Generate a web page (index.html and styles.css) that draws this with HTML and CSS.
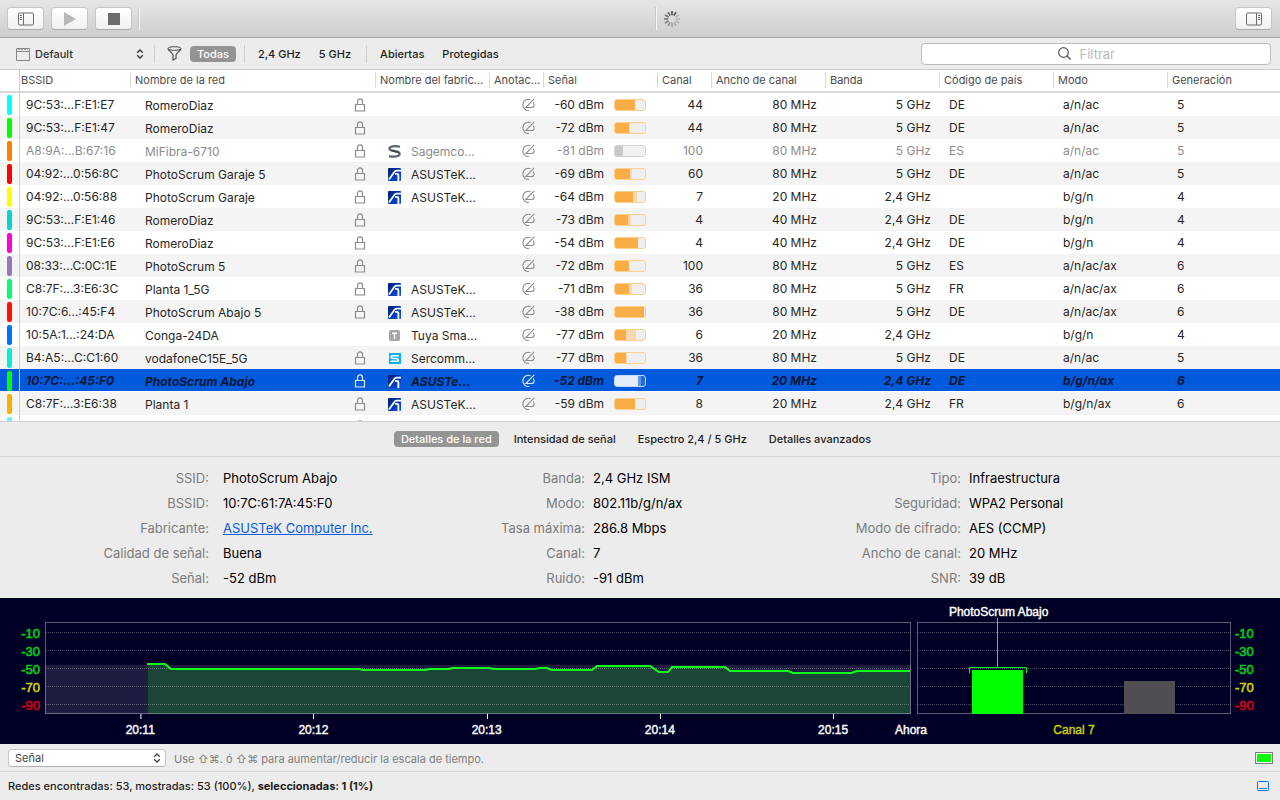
FILE: index.html
```html
<!DOCTYPE html>
<html lang="es">
<head>
<meta charset="utf-8">
<title>Redes Wi-Fi</title>
<link rel="stylesheet" href="styles.css">
</head>
<body>
<svg class="sprite" aria-hidden="true">
  <defs>
    <linearGradient id="asusFill" x1="0" y1="0" x2="1" y2="1"><stop offset="0" stop-color="#001c70"/><stop offset="1" stop-color="#0b55e6"/></linearGradient>
  </defs>
  <symbol id="lock" viewBox="0 0 12 14"><path d="M1.500 6.500h9v6.500h-9zM3.500 6.500V3.500C3.500 1.900 4.500.8 6 .8s2.500 1.100 2.500 2.700v3" fill="none" stroke="currentColor" stroke-width="1.200"/></symbol>
  <symbol id="note" viewBox="0 0 14 14"><path d="M9.500 1.700A5.600 5.600 0 1 0 8 12.500M13.200.8L4.800 9.500h5.800c2.600 0 3.200-2.400 1.700-5" fill="none" stroke="currentColor" stroke-width="1.100"/></symbol>
  <symbol id="asus" viewBox="0 0 13 13"><rect width="13" height="13" rx="1" fill="url(#asusFill)"/><path d="M1 11.500l5.300-7.600C6.900 3 7.500 2.700 8.500 2.700H13M7 5.800h2c1 0 1.400.4 1.400 1.400V13" fill="none" stroke="#fff" stroke-width="1.800"/></symbol>
  <symbol id="sagem" viewBox="0 0 13 13"><path d="M12 1.800C7.500.7 1.300 1 1.300 3.800c0 2.700 10.400 1.500 10.400 5 0 3.200-6.500 3.300-10.700 2.300" fill="none" stroke="#59636c" stroke-width="2.200"/><path d="M3 5.500l8 2" stroke="#35424c" stroke-width="1.500"/></symbol>
  <symbol id="tuya" viewBox="0 0 13 13"><rect x="1" y="1" width="11" height="11" rx="2" fill="#a5a5a5"/><path d="M4 4.300h5M6.500 4v6" stroke="#fff" stroke-width="1.500"/></symbol>
  <symbol id="sercomm" viewBox="0 0 13 13"><rect x="1" y="1" width="12" height="11" fill="#0bb0ef"/><path d="M11 3.700H4.200c-1.500 0-1.500 2.300 0 2.500l5 .6c1.500.2 1.500 2.500 0 2.500H2.500" fill="none" stroke="#fff" stroke-width="1.600"/></symbol>
  <symbol id="updown" viewBox="0 0 8 10"><path d="M1.200 3.700L4 1l2.800 2.700M1.200 6.300L4 9l2.800-2.700" fill="none" stroke="currentColor" stroke-width="1.300"/></symbol>
</svg>

<header class="toolbar">
  <div class="tools">
    <button class="tool" aria-label="Barra lateral izquierda"><svg width="18" height="14" viewBox="0 0 18 14"><rect x="1.500" y="1" width="15" height="12" rx="1" fill="none" stroke="#6b6b6b"/><path d="M6.500 1v12M2.800 3.500h2.200M2.800 5.500h2.200M2.800 7.500h2.200" stroke="#6b6b6b"/></svg></button>
    <button class="tool" aria-label="Iniciar"><svg width="14" height="14" viewBox="0 0 14 14"><path d="M1 0l12 7-12 7z" fill="#b9b9b9"/></svg></button>
    <button class="tool" aria-label="Detener"><svg width="12" height="12" viewBox="0 0 12 12"><rect width="12" height="12" fill="#6c6c6c"/></svg></button>
    <span class="groove"></span>
  </div>
  <div class="activity">
    <span class="groove"></span>
    <svg width="16" height="16" viewBox="-8 -8 16 16" stroke-width="1.500" stroke="#3c3c3c"><path d="M0-3.800V-8"/><path d="M0-3.800V-8" transform="rotate(30)" opacity=".9"/><path d="M0-3.800V-8" transform="rotate(60)" opacity=".25"/><path d="M0-3.800V-8" transform="rotate(90)" opacity=".25"/><path d="M0-3.800V-8" transform="rotate(120)" opacity=".25"/><path d="M0-3.800V-8" transform="rotate(150)" opacity=".3"/><path d="M0-3.800V-8" transform="rotate(180)" opacity=".4"/><path d="M0-3.800V-8" transform="rotate(210)" opacity=".5"/><path d="M0-3.800V-8" transform="rotate(240)" opacity=".6"/><path d="M0-3.800V-8" transform="rotate(270)" opacity=".7"/><path d="M0-3.800V-8" transform="rotate(300)" opacity=".7"/><path d="M0-3.800V-8" transform="rotate(330)" opacity=".8"/></svg>
  </div>
  <div class="tools end">
    <button class="tool" aria-label="Barra lateral derecha"><svg width="18" height="14" viewBox="0 0 18 14"><rect x="1.500" y="1" width="15" height="12" rx="1" fill="none" stroke="#6b6b6b"/><path d="M11.500 1v12M13 3.500h2.200M13 5.500h2.200M13 7.500h2.200" stroke="#6b6b6b"/></svg></button>
  </div>
</header>

<nav class="filters">
  <label class="profile">
    <svg width="14" height="14" viewBox="0 0 14 14"><path d="M.5 1.500h13v12H.5zM.5 4.500h13" fill="none" stroke="#888"/><path d="M2 2.500h10" stroke="#999" stroke-dasharray="2 1"/></svg>
    <select aria-label="Perfil"><option>Default</option></select>
    <svg class="chevrons" width="8" height="10"><use href="#updown"/></svg>
  </label>
  <span class="rule first"></span>
  <svg class="funnel" width="15" height="15" viewBox="0 0 15 15"><ellipse cx="7.500" cy="2.500" rx="6.500" ry="1.800" fill="none" stroke="#4c4c4c"/><path d="M1 2.800c.3 1.200 5 5 5 6.200v5l3-1.500V9c0-1.200 4.700-5 5-6.200" fill="none" stroke="#4c4c4c" stroke-width="1.200"/></svg>
  <button class="pill on">Todas</button>
  <span class="rule"></span>
  <button class="pill">2,4 GHz</button>
  <button class="pill">5 GHz</button>
  <span class="rule"></span>
  <button class="pill">Abiertas</button>
  <button class="pill">Protegidas</button>
  <label class="search">
    <svg width="13" height="13" viewBox="0 0 13 13"><circle cx="5.500" cy="5.500" r="4.800" fill="none" stroke="#555" stroke-width="1.200"/><path d="M9 9l3.600 3.600" stroke="#555" stroke-width="1.300"/></svg>
    <input type="text" placeholder="Filtrar" aria-label="Filtrar">
  </label>
</nav>

<main class="networks">
<table>
<colgroup><col class="w-tag"><col class="w-bssid"><col><col class="w-lock"><col class="w-mid"><col class="w-note"><col class="w-mid"><col class="w-chan"><col class="w-mid"><col class="w-mid"><col class="w-mid"><col class="w-mid"><col class="w-last"></colgroup>
<thead><tr><th class="tag"></th><th>BSSID</th><th colspan="2">Nombre de la red</th><th>Nombre del fabric…</th><th>Anotac…</th><th>Señal</th><th>Canal</th><th>Ancho de canal</th><th>Banda</th><th>Código de país</th><th>Modo</th><th>Generación</th></tr></thead>
<tbody>
<tr><td class="tag"><i class="c-cyan"></i></td><td>9C:53:…F:E1:E7</td><td class="name">RomeroDiaz</td><td class="ic"><svg class="lock"><use href="#lock"/></svg></td><td></td><td class="an"><svg class="note"><use href="#note"/></svg></td><td class="sig"><div>-60 dBm<meter class="m" style="--v:66%;--p:66%" value="66" max="100"></meter></div></td><td class="r">44</td><td class="r">80 MHz</td><td class="r">5 GHz</td><td>DE</td><td>a/n/ac</td><td>5</td></tr>
<tr><td class="tag"><i class="c-green"></i></td><td>9C:53:…F:E1:47</td><td class="name">RomeroDiaz</td><td class="ic"><svg class="lock"><use href="#lock"/></svg></td><td></td><td class="an"><svg class="note"><use href="#note"/></svg></td><td class="sig"><div>-72 dBm<meter class="m" style="--v:46%;--p:49%" value="46" max="100"></meter></div></td><td class="r">44</td><td class="r">80 MHz</td><td class="r">5 GHz</td><td>DE</td><td>a/n/ac</td><td>5</td></tr>
<tr class="dim"><td class="tag"><i class="c-orange"></i></td><td>A8:9A:…B:67:16</td><td class="name">MiFibra-6710</td><td class="ic"><svg class="lock"><use href="#lock"/></svg></td><td class="maker"><div><svg class="logo"><use href="#sagem"/></svg>Sagemco…</div></td><td class="an"><svg class="note"><use href="#note"/></svg></td><td class="sig"><div>-81 dBm<meter class="m" style="--v:27%;--p:27%" value="27" max="100"></meter></div></td><td class="r">100</td><td class="r">80 MHz</td><td class="r">5 GHz</td><td>ES</td><td>a/n/ac</td><td>5</td></tr>
<tr><td class="tag"><i class="c-red"></i></td><td>04:92:…0:56:8C</td><td class="name">PhotoScrum Garaje 5</td><td class="ic"><svg class="lock"><use href="#lock"/></svg></td><td class="maker"><div><svg class="logo"><use href="#asus"/></svg>ASUSTeK…</div></td><td class="an"><svg class="note"><use href="#note"/></svg></td><td class="sig"><div>-69 dBm<meter class="m" style="--v:50%;--p:56%" value="50" max="100"></meter></div></td><td class="r">60</td><td class="r">80 MHz</td><td class="r">5 GHz</td><td>DE</td><td>a/n/ac</td><td>5</td></tr>
<tr><td class="tag"><i class="c-yellow"></i></td><td>04:92:…0:56:88</td><td class="name">PhotoScrum Garaje</td><td class="ic"><svg class="lock"><use href="#lock"/></svg></td><td class="maker"><div><svg class="logo"><use href="#asus"/></svg>ASUSTeK…</div></td><td class="an"><svg class="note"><use href="#note"/></svg></td><td class="sig"><div>-64 dBm<meter class="m" style="--v:60%;--p:72%" value="60" max="100"></meter></div></td><td class="r">7</td><td class="r">20 MHz</td><td class="r">2,4 GHz</td><td></td><td>b/g/n</td><td>4</td></tr>
<tr><td class="tag"><i class="c-teal"></i></td><td>9C:53:…F:E1:46</td><td class="name">RomeroDiaz</td><td class="ic"><svg class="lock"><use href="#lock"/></svg></td><td></td><td class="an"><svg class="note"><use href="#note"/></svg></td><td class="sig"><div>-73 dBm<meter class="m" style="--v:43%;--p:53%" value="43" max="100"></meter></div></td><td class="r">4</td><td class="r">40 MHz</td><td class="r">2,4 GHz</td><td>DE</td><td>b/g/n</td><td>4</td></tr>
<tr><td class="tag"><i class="c-magenta"></i></td><td>9C:53:…F:E1:E6</td><td class="name">RomeroDiaz</td><td class="ic"><svg class="lock"><use href="#lock"/></svg></td><td></td><td class="an"><svg class="note"><use href="#note"/></svg></td><td class="sig"><div>-54 dBm<meter class="m" style="--v:76%;--p:76%" value="76" max="100"></meter></div></td><td class="r">4</td><td class="r">40 MHz</td><td class="r">2,4 GHz</td><td>DE</td><td>b/g/n</td><td>4</td></tr>
<tr><td class="tag"><i class="c-violet"></i></td><td>08:33:…C:0C:1E</td><td class="name">PhotoScrum 5</td><td class="ic"><svg class="lock"><use href="#lock"/></svg></td><td></td><td class="an"><svg class="note"><use href="#note"/></svg></td><td class="sig"><div>-72 dBm<meter class="m" style="--v:46%;--p:46%" value="46" max="100"></meter></div></td><td class="r">100</td><td class="r">80 MHz</td><td class="r">5 GHz</td><td>ES</td><td>a/n/ac/ax</td><td>6</td></tr>
<tr><td class="tag"><i class="c-spring"></i></td><td>C8:7F:…3:E6:3C</td><td class="name">Planta 1_5G</td><td class="ic"><svg class="lock"><use href="#lock"/></svg></td><td class="maker"><div><svg class="logo"><use href="#asus"/></svg>ASUSTeK…</div></td><td class="an"><svg class="note"><use href="#note"/></svg></td><td class="sig"><div>-71 dBm<meter class="m" style="--v:46%;--p:56%" value="46" max="100"></meter></div></td><td class="r">36</td><td class="r">80 MHz</td><td class="r">5 GHz</td><td>FR</td><td>a/n/ac/ax</td><td>6</td></tr>
<tr><td class="tag"><i class="c-red2"></i></td><td>10:7C:6…:45:F4</td><td class="name">PhotoScrum Abajo 5</td><td class="ic"><svg class="lock"><use href="#lock"/></svg></td><td class="maker"><div><svg class="logo"><use href="#asus"/></svg>ASUSTeK…</div></td><td class="an"><svg class="note"><use href="#note"/></svg></td><td class="sig"><div>-38 dBm<meter class="m" style="--v:93%;--p:93%" value="93" max="100"></meter></div></td><td class="r">36</td><td class="r">80 MHz</td><td class="r">5 GHz</td><td>DE</td><td>a/n/ac/ax</td><td>6</td></tr>
<tr><td class="tag"><i class="c-blue"></i></td><td>10:5A:1…:24:DA</td><td class="name">Conga-24DA</td><td></td><td class="maker"><div><svg class="logo"><use href="#tuya"/></svg>Tuya Sma…</div></td><td class="an"><svg class="note"><use href="#note"/></svg></td><td class="sig"><div>-77 dBm<meter class="m" style="--v:37%;--p:69%" value="37" max="100"></meter></div></td><td class="r">6</td><td class="r">20 MHz</td><td class="r">2,4 GHz</td><td></td><td>b/g/n</td><td>4</td></tr>
<tr><td class="tag"><i class="c-aqua"></i></td><td>B4:A5:…C:C1:60</td><td class="name">vodafoneC15E_5G</td><td class="ic"><svg class="lock"><use href="#lock"/></svg></td><td class="maker"><div><svg class="logo"><use href="#sercomm"/></svg>Sercomm…</div></td><td class="an"><svg class="note"><use href="#note"/></svg></td><td class="sig"><div>-77 dBm<meter class="m" style="--v:37%;--p:40%" value="37" max="100"></meter></div></td><td class="r">36</td><td class="r">80 MHz</td><td class="r">5 GHz</td><td>DE</td><td>a/n/ac</td><td>5</td></tr>
<tr class="sel"><td class="tag"><i class="c-green"></i></td><td>10:7C:…:45:F0</td><td class="name">PhotoScrum Abajo</td><td class="ic"><svg class="lock"><use href="#lock"/></svg></td><td class="maker"><div><svg class="logo"><use href="#asus"/></svg>ASUSTe…</div></td><td class="an"><svg class="note"><use href="#note"/></svg></td><td class="sig"><div>-52 dBm<meter class="m" style="--v:76%;--p:86%" value="76" max="100"></meter></div></td><td class="r">7</td><td class="r">20 MHz</td><td class="r">2,4 GHz</td><td>DE</td><td>b/g/n/ax</td><td>6</td></tr>
<tr><td class="tag"><i class="c-amber"></i></td><td>C8:7F:…3:E6:38</td><td class="name">Planta 1</td><td class="ic"><svg class="lock"><use href="#lock"/></svg></td><td class="maker"><div><svg class="logo"><use href="#asus"/></svg>ASUSTeK…</div></td><td class="an"><svg class="note"><use href="#note"/></svg></td><td class="sig"><div>-59 dBm<meter class="m" style="--v:66%;--p:66%" value="66" max="100"></meter></div></td><td class="r">8</td><td class="r">20 MHz</td><td class="r">2,4 GHz</td><td>FR</td><td>b/g/n/ax</td><td>6</td></tr>
<tr><td class="tag"><i class="c-sky"></i></td><td></td><td></td><td class="ic"><svg class="lock"><use href="#lock"/></svg></td><td></td><td class="an"><svg class="note"><use href="#note"/></svg></td><td></td><td></td><td></td><td></td><td></td><td></td><td></td></tr>
</tbody>
</table>
</main>

<nav class="tabs">
  <button class="pill on">Detalles de la red</button>
  <button class="pill">Intensidad de señal</button>
  <button class="pill">Espectro 2,4 / 5 GHz</button>
  <button class="pill">Detalles avanzados</button>
</nav>

<section class="details">
  <dl class="wide"><dt>SSID:</dt><dd>PhotoScrum Abajo</dd><dt>BSSID:</dt><dd>10:7C:61:7A:45:F0</dd><dt>Fabricante:</dt><dd><a href="#">ASUSTeK Computer Inc.</a></dd><dt>Calidad de señal:</dt><dd>Buena</dd><dt>Señal:</dt><dd>-52 dBm</dd></dl>
  <dl><dt>Banda:</dt><dd>2,4 GHz ISM</dd><dt>Modo:</dt><dd>802.11b/g/n/ax</dd><dt>Tasa máxima:</dt><dd>286.8 Mbps</dd><dt>Canal:</dt><dd>7</dd><dt>Ruido:</dt><dd>-91 dBm</dd></dl>
  <dl><dt>Tipo:</dt><dd>Infraestructura</dd><dt>Seguridad:</dt><dd>WPA2 Personal</dd><dt>Modo de cifrado:</dt><dd>AES (CCMP)</dd><dt>Ancho de canal:</dt><dd>20 MHz</dd><dt>SNR:</dt><dd>39 dB</dd></dl>
</section>

<section class="charts">
  <div class="scale left"><span>-10</span><span>-30</span><span>-50</span><span class="warn">-70</span><span class="bad">-90</span></div>
  <div class="plot">
    <svg viewBox="0 0 866 92" preserveAspectRatio="none">
      <rect y="43" width="866" height="49" fill="#1e1c3f"/>
      <path d="M103 92V42H120L126 47H314L318 48H380L385 47H403L408 46H444L449 47H490L495 46H502L507 48H547L552 44H605L614 50H623L627 45H680L685 49H743L748 51H806L812 49H865V92z" fill="#1b4537"/>
      <path d="M1 10.500h864M1 28.500h864M1 46.500h864M1 64.500h864M1 82.500h864" class="dots"/>
      <rect x=".5" y=".5" width="865" height="91" class="frame"/>
      <path d="M102 42H120L126 47H314L318 48H380L385 47H403L408 46H444L449 47H490L495 46H502L507 48H547L552 44H605L614 50H623L627 45H680L685 49H743L748 51H806L812 49H865" class="trace"/>
    </svg>
    <div class="times"><span style="left:11%">20:11</span><span style="left:31%">20:12</span><span style="left:51%">20:13</span><span style="left:71%">20:14</span><span style="left:91%">20:15</span><span class="now" style="left:100%">Ahora</span></div>
  </div>
  <div class="plot">
    <svg viewBox="0 0 314 92" preserveAspectRatio="none">
      <path d="M1 10.500h312M1 28.500h312M1 46.500h312M1 64.500h312M1 82.500h312" class="dots"/>
      <rect x=".5" y=".5" width="313" height="91" class="frame"/>
      <path d="M55 48h51v44H55z" fill="#0f0"/><path d="M207 59h51v33h-51z" fill="#504e52"/>
      <path d="M80.500-4v49.500M52.500 51v-5.500h57V51" fill="none" stroke="#00ff20"/>
    </svg>
    <span class="peak">PhotoScrum Abajo</span>
    <div class="channel">Canal 7</div>
  </div>
  <div class="scale"><span>-10</span><span>-30</span><span>-50</span><span class="warn">-70</span><span class="bad">-90</span></div>
</section>

<section class="options">
  <label class="metric"><select aria-label="Métrica"><option>Señal</option></select><svg class="chevrons" width="8" height="10"><use href="#updown"/></svg></label>
  <span class="hint">Use ⇧⌘. ó ⇧⌘ para aumentar/reducir la escala de tiempo.</span>
  <button class="swatch" aria-label="Color"></button>
</section>

<footer class="status">
  <span>Redes encontradas: 53, mostradas: 53 (100%), <b>seleccionadas: 1 (1%)</b></span>
  <button class="panel" aria-label="Panel inferior"><svg width="12" height="10" viewBox="0 0 12 10"><rect x=".5" y=".5" width="11" height="9" rx="1" fill="none" stroke="#0a70ff"/><path d="M2 7.500h8" stroke="#0a70ff"/></svg></button>
</footer>
</body>
</html>
```
FILE: styles.css
```css
* { box-sizing: border-box; }
body {
  margin: 0;
  height: 100vh;
  min-height: 600px;
  display: flex;
  flex-direction: column;
  overflow: hidden;
  background: #ececec;
  color: #1c1c1c;
  font: 11px/16px Inter, "Liberation Sans", sans-serif;
}
button, select, input { font: inherit; color: inherit; margin: 0; padding: 0; border: 0; background: none; }
select { appearance: none; outline: none; }
svg { display: block; flex: none; }
.sprite { position: absolute; width: 0; height: 0; }

.toolbar {
  flex: none;
  display: flex;
  height: 38px;
  padding: 0 8px 0 7px;
  border-bottom: 1px solid #a6a6a6;
  background: linear-gradient(#e6e6e6, #cecece);
}
.tools { flex: 1; display: flex; align-items: center; gap: 7px; }
.end { justify-content: flex-end; }
.tool {
  display: flex;
  align-items: center;
  justify-content: center;
  width: 37px;
  height: 23px;
  border-radius: 4px;
  border: 1px solid #c6c6c6;
  border-bottom-color: #aaa;
  background: linear-gradient(#fff, #f1f1f1);
}
.groove { width: 1px; height: 23px; background: #f6f6f6; box-shadow: -1px 0 #c8c8c8; }
.activity { width: 80px; display: flex; align-items: center; justify-content: flex-end; gap: 7px; }

.filters {
  flex: none;
  display: flex;
  align-items: center;
  height: 32px;
  padding: 0 9px 0 16px;
  border-bottom: 1px solid #cdcdcd;
}
.profile { display: flex; align-items: center; gap: 5px; width: 128px; color: #333; font-weight: 500; }
.profile select { flex: 1; }
.rule { width: 1px; height: 18px; margin: 0 6px 0 4px; background: #cfcfcf; }
.rule.first { margin: 0 12px 0 10px; }
.funnel { margin-right: 8px; }
.pill { height: 16px; padding: 0 7px; border-radius: 4px; font-weight: 500; white-space: nowrap; }
.filters .pill { margin-right: 4px; }
.pill.on { background: #949494; color: #fff; }
.search {
  display: flex;
  align-items: center;
  justify-content: center;
  gap: 9px;
  width: 350px;
  height: 22px;
  margin-left: auto;
  border: 1px solid #bcbcbc;
  border-radius: 4px;
  background: #fff;
  font-size: 13px;
}
.search input { width: 55px; outline: none; }
.search input::placeholder { color: #b9b9b9; opacity: 1; }

.networks { flex: 1; min-height: 0; overflow: hidden; background: #fff; border-bottom: 1px solid #cfcfcf; }
table { width: 100%; table-layout: fixed; border-collapse: separate; border-spacing: 0; }
.w-tag { width: 20px; }
.w-bssid { width: 111px; }
.w-lock { width: 30px; }
.w-mid { width: 114px; }
.w-last { width: 112px; }
.w-note { width: 54px; }
.w-chan { width: 54px; }
th {
  height: 23px;
  padding: 0 0 1px 4px;
  border-bottom: 2px solid #d8d8d8;
  background: linear-gradient(#dcdcdc, #dcdcdc) right 0 top 2px / 1px 16px no-repeat;
  color: #4c4c4c;
  font-weight: 400;
  text-align: left;
  white-space: nowrap;
}
th:nth-child(2) { padding-left: 1px; }
th.tag, th:last-child { background: none; }
td { height: 23px; padding: 0 9px; font-size: 12px; line-height: 16px; white-space: nowrap; color: #262626; }
td:nth-child(2) { padding: 0 0 0 6px; }
.tag { padding: 0 5px 0 7px; border-right: 1px solid #cdcdcd; }
.tag i { display: block; width: 5px; height: 20px; border-radius: 2px; }
.name { padding: 2px 0 0 14px; }
.ic { padding: 0 8px; }
.lock { width: 12px; height: 14px; color: #8c8c8c; }
.an { padding: 0 0 0 31px; }
.note { width: 14px; height: 14px; color: #8c8c8c; }
.maker { padding: 2px 0 0 12px; }
.maker div { display: flex; align-items: center; gap: 10px; }
.logo { width: 13px; height: 13px; }
.sig { padding: 0 12px 0 0; }
.sig div { display: flex; align-items: center; justify-content: flex-end; gap: 10px; }
.m {
  appearance: none;
  width: 32px;
  height: 12px;
  border: 1px solid #fbcf8f;
  border-radius: 3px;
  background: linear-gradient(90deg, #fbad45 var(--v), #f6d8b0 var(--v) var(--p), #efefef var(--p)) border-box;
}
.m::-webkit-meter-inner-element { display: none; }
.r { text-align: right; }
tbody tr:nth-child(even) { background: #f4f4f4; }
.dim td { color: #8c8c8c; }
.dim .m { border-color: #d2d2d2; background: linear-gradient(90deg, #cacaca var(--v), #f1f1f1 var(--v)); }
.sel { background: linear-gradient(#005adc, #005adc) 0 0 / 100% 22px no-repeat; }
.sel td { color: #061638; font-weight: 700; font-style: italic; }
.sel .lock, .sel .note { color: #e4edfb; }
.sel .m { border-color: #c4d8f7; background: linear-gradient(90deg, #e6eefb var(--v), #5e95e6 var(--v) var(--p), #1e6ade var(--p)); }
.c-cyan { background: #0ff; }
.c-green { background: #0f0; }
.c-orange { background: #ff7d00; }
.c-red { background: #f00; }
.c-yellow { background: #ff0; }
.c-teal { background: #00d5cf; }
.c-magenta { background: #ff00d8; }
.c-violet { background: #9a76bd; }
.c-spring { background: #00ff72; }
.c-red2 { background: #ff1200; }
.c-blue { background: #0070ff; }
.c-aqua { background: #00f2d6; }
.c-amber { background: #f9b000; }
.c-sky { background: #5ff3ff; }

.tabs { flex: none; display: flex; align-items: center; justify-content: center; gap: 8px; height: 35px; padding-right: 8px; border-bottom: 1px solid #d2d2d2; }

.details { flex: none; display: grid; grid-template-columns: 400fr 376fr 504fr; padding: 9px 0 7px; }
dl { display: grid; grid-template-columns: 185px 1fr; column-gap: 8px; margin: 0; font-size: 13px; line-height: 25px; }
.wide { grid-template-columns: 209px 1fr; column-gap: 14px; }
dt { text-align: right; color: #7b7b7b; }
dd { margin: 0; color: #000; white-space: nowrap; }
a { color: #0a5be0; }

.charts {
  flex: none;
  display: grid;
  grid-template-columns: 45px 866fr 6px 314fr 49px;
  height: 146px;
  padding-top: 24px;
  background: #000026;
  color: #fff;
  font: 12px/18px "Liberation Sans", sans-serif;
}
.scale { display: flex; flex-direction: column; padding: 3px 0 0 4px; color: #00cc1c; font-size: 13px; -webkit-text-stroke: 0.6px; }
.scale.left { padding: 3px 5px 0 0; text-align: right; }
.warn { color: #cfcf00; }
.bad { color: #cf0010; }
.plot { position: relative; }
.plot + .plot { grid-column: 4; }
.plot svg { width: 100%; height: 92px; overflow: visible; }
.dots { fill: none; stroke: #fff; stroke-opacity: .3; stroke-dasharray: 1 1; }
.frame { fill: none; stroke: #fff; stroke-opacity: .35; }
.trace { fill: none; stroke: #10ff18; stroke-width: 2; vector-effect: non-scaling-stroke; }
.times span { position: absolute; top: 92px; padding-top: 7px; transform: translateX(-50%); }
.times span::before { content: ""; position: absolute; left: 50%; top: 0; width: 1px; height: 5px; background: #fff; }
.times .now::before { display: none; }
.peak { position: absolute; left: 26%; top: -19px; transform: translateX(-50%); white-space: nowrap; }
.channel { padding-top: 7px; text-align: center; color: #cfcf00; }
.times, .peak, .channel { -webkit-text-stroke: 0.4px; }

.options { flex: none; display: flex; align-items: center; gap: 8px; height: 28px; padding: 0 7px 0 8px; border-bottom: 1px solid #d2d2d2; }
.metric {
  display: flex;
  align-items: center;
  width: 158px;
  height: 18px;
  padding: 0 4px 0 6px;
  border: 1px solid #c6c6c6;
  border-bottom-color: #b0b0b0;
  border-radius: 4px;
  background: #fff;
  color: #444;
}
.metric select { flex: 1; }
.hint { color: #808080; padding-top: 2px; }
.swatch { width: 18px; height: 12px; margin-left: auto; border: 1px solid #808080; padding: 1px; background: #0f0 content-box; box-shadow: inset 0 0 0 1px #fff; }
.status { flex: none; display: flex; align-items: center; justify-content: space-between; height: 28px; padding: 0 11px 0 8px; font-weight: 500; }
.status b { font-weight: 700; }
```
